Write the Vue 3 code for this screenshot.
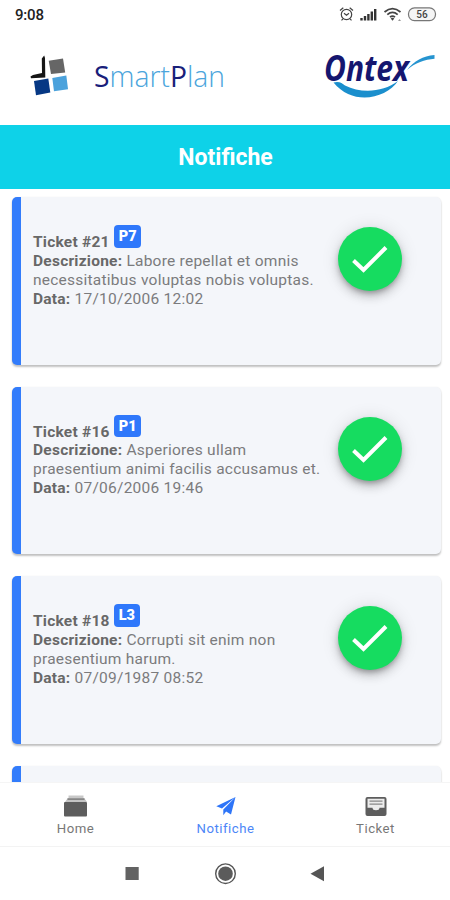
<script setup>
const tickets = [
  { id: 21, code: 'P7', lines: ['Labore repellat et omnis', 'necessitatibus voluptas nobis voluptas.'], date: '17/10/2006 12:02' },
  { id: 16, code: 'P1', lines: ['Asperiores ullam', 'praesentium animi facilis accusamus et.'], date: '07/06/2006 19:46' },
  { id: 18, code: 'L3', lines: ['Corrupti sit enim non', 'praesentium harum.'], date: '07/09/1987 08:52' },
]
</script>

<template>
  <div class="screen">
    <header class="status">
      <span class="time">9:08</span>
      <svg class="status-icons" width="100" height="16" viewBox="0 0 100 16">
        <g fill="none" stroke="#444" stroke-width="1.2">
          <circle cx="8.5" cy="8.5" r="5.2" />
          <path d="M2 4.5 5.300 1.700M11.700 1.700l3.300 2.800M5 12.800 3.500 14.300M12 12.800l1.500 1.500M6 7.300l2.500 2 2.500-2" />
        </g>
        <path d="M22.3 12h2.4v2.500h-2.4zM25.8 10h2.4v4.500h-2.4zM29.2 8h2.4v6.500h-2.4zM32.6 5.500H35v9h-2.4zM36 3h2.4v11.500H36z" fill="#333" />
        <g fill="none" stroke="#444" stroke-width="1.8">
          <path d="M46.500 6c5-4.3 11-4.3 16 0M49.300 8.600c3.3-2.8 7.1-2.8 10.4 0M52 11.100c1.6-1.3 3.4-1.3 5 0" />
        </g>
        <path d="m52.700 12.500 1.8 2.3 1.8-2.3c-1.1-.9-2.5-.9-3.6 0z" fill="#444" />
        <path d="m60 15 1.500-2 1.500 2z" fill="#999" />
        <rect x="70.5" y="1.8" width="27" height="12.8" rx="6" fill="#f5f5f5" stroke="#777" stroke-width="1.2" />
        <text x="84" y="12" text-anchor="middle" class="battery">56</text>
      </svg>
    </header>

    <section class="brands">
      <svg class="smartplan" width="200" height="52" viewBox="0 0 200 52">
        <path d="m11.8 8.5 2.4-3 .8 2.5.3 19.5L1 28.2l-.5-1.7L3 25l9-2z" fill="#151515" />
        <path d="m18.7 10.8 14.3-2.3 2.2 14L21 24z" fill="#666" />
        <path d="m4 31 14.3-2.5 2 14L6 45.3z" fill="#063884" />
        <path d="m22.3 28 14-2.5L38 39.3l-14 2z" fill="#4ba2dc" />
        <text x="64" y="37" class="sp-text" textLength="131" lengthAdjust="spacingAndGlyphs"><tspan class="navy">S</tspan>mart<tspan class="navy">P</tspan>lan</text>
      </svg>
      <svg class="ontex" width="112" height="50" viewBox="0 0 112 50">
        <path d="M8.500 32.500C14 31 17 33 20 35.500 36 43.500 58 42.500 73 31 61 48.500 28 56.500 8.500 32.500z" fill="#1b8fcd" />
        <path d="M82 20C89 11 98 6 109.500 5v3.800C100 9.500 90 13 82 20z" fill="#2694d0" />
        <text x="-1" y="31" class="ontex-text" textLength="85" lengthAdjust="spacingAndGlyphs">Ontex</text>
      </svg>
    </section>

    <h1 class="title">Notifiche</h1>

    <main class="list">
      <article v-for="t in tickets" :key="t.id" class="card">
        <div class="info">
          <div class="heading"><b>Ticket #{{ t.id }}</b><span class="tag">{{ t.code }}</span></div>
          <div><b>Descrizione:</b> {{ t.lines[0] }}</div>
          <div>{{ t.lines[1] }}</div>
          <div><b>Data:</b> {{ t.date }}</div>
        </div>
        <div class="done">
          <svg width="64" height="64" viewBox="0 0 64 64"><path d="m15.500 33.500 10 9.500 22.500-22.500" fill="none" stroke="#fff" stroke-width="4" /></svg>
        </div>
      </article>
      <article class="card"></article>
    </main>

    <nav class="tabs">
      <div class="tab">
        <svg width="26" height="24" viewBox="0 0 26 24">
          <path d="M5.500 1.500h15V4h-15z" fill="#c8c8c8" />
          <path d="M4.500 4.500h17L24 8H2z" fill="#c4c4c4" /><path d="M4.500 4.300h17v1.500h-17z" fill="#777" />
          <rect x="1" y="8" width="23" height="14.500" rx="1" fill="#5d5d5d" />
        </svg>
        <span>Home</span>
      </div>
      <div class="tab active">
        <svg width="26" height="24" viewBox="0 0 26 24">
          <path d="M22.500 3 3.300 12.200l5.700 2.400zM22.500 3 10.300 15.500v5.700l2.800-3.800 4.900 3.200z" fill="#2e75f8" />
        </svg>
        <span>Notifiche</span>
      </div>
      <div class="tab">
        <svg width="26" height="24" viewBox="0 0 26 24">
          <rect x="2.500" y="3" width="21" height="19" rx="2" fill="#5d5d5d" />
          <path d="M4.500 4.800h17v8.900h-5a3.500 2.500 0 0 1-7 0h-5z" fill="#ececec" />
          <path d="M6.500 7.200h13M6.500 10.200h13" stroke="#888" stroke-width="1.300" />
        </svg>
        <span>Ticket</span>
      </div>
    </nav>

    <footer class="system">
      <svg width="24" height="24" viewBox="0 0 24 24"><rect x="5.500" y="5" width="13.200" height="13" fill="#626262" /></svg>
      <svg width="24" height="24" viewBox="0 0 24 24"><circle cx="12.500" cy="11.700" r="9.800" fill="none" stroke="#555" stroke-width="1.400" /><circle cx="12.500" cy="11.700" r="7.300" fill="#5b5b5b" /></svg>
      <svg width="24" height="24" viewBox="0 0 24 24"><path d="M18 4.200v15L4.500 11.700z" fill="#555" /></svg>
    </footer>
  </div>
</template>

<style>
body { margin: 0; background: #fff; }
</style>

<style scoped>
.screen { width: 450px; height: 900px; display: flex; flex-direction: column; overflow: hidden; background: #fff; font-family: Roboto, sans-serif; }
.status { height: 30px; flex: none; display: flex; justify-content: space-between; align-items: flex-end; padding: 0 12px 0 15px; box-sizing: border-box; }
.time { font-size: 15px; line-height: 18px; font-weight: 500; color: #222; margin-bottom: 6px; letter-spacing: -.2px; }
.status-icons { margin-bottom: 8px; }
.battery { font: 500 10px Roboto, sans-serif; fill: #444; }
.brands { height: 95px; flex: none; display: flex; justify-content: space-between; padding: 20px 13px 0 30px; box-sizing: border-box; align-items: flex-start; }
.ontex { overflow: visible; }
.sp-text { font: 29px "Open Sans", sans-serif; font-weight: 300; fill: #4ba5dc; }
.navy { fill: #18207a; font-weight: 400; }
.ontex-text { font: italic 700 35px "Open Sans", sans-serif; fill: #15166f; }
.title { height: 64px; flex: none; margin: 0; background: #0ed2e8; color: #fff; font-size: 23px; line-height: 66px; text-align: center; font-weight: 700; text-indent: 1px; }
.list { flex: 1; min-height: 0; overflow: hidden; padding: 8px 9px 0 12px; display: flex; flex-direction: column; gap: 22px; }
.card { height: 167.500px; flex: none; box-sizing: border-box; border-left: 9.500px solid #327cfb; border-radius: 5px; background: #f4f6fa; box-shadow: 0 2px 2px rgba(0,0,0,.24), 0 0 2px rgba(0,0,0,.06); display: flex; justify-content: space-between; padding: 30px 39.500px 0 12px; }
.info { padding-top: 6.200px; font-size: 15.500px; line-height: 18.800px; letter-spacing: .24px; color: #7b7b7d; white-space: nowrap; }
.info b { color: #686868; font-weight: 700; }
.heading { display: flex; height: 18.800px; align-items: flex-end; gap: 4.500px; }
.tag { height: 22.500px; box-sizing: border-box; margin-bottom: 4px; padding: 0 4.500px; border-radius: 4px; background: #2f78fb; color: #fff; font-size: 14.500px; line-height: 23px; font-weight: 900; letter-spacing: 0; }
.done { width: 64px; height: 64px; flex: none; border-radius: 50%; background: #16dc60; box-shadow: 0 3px 5px -1px rgba(0,0,0,.25), 0 6px 10px rgba(0,0,0,.16), 0 1px 18px rgba(0,0,0,.12); }
.done svg { display: block; }
.tabs { height: 65px; flex: none; display: flex; background: #fff; border-top: 1px solid #f5f5f5; border-bottom: 1px solid #f3f3f3; box-sizing: border-box; }
.tab { flex: 1; display: flex; flex-direction: column; align-items: center; padding: 11px 0 0 1px; color: #777; font-size: 13.200px; line-height: 18px; letter-spacing: .5px; }
.tab span { margin-top: 2px; }
.active { color: #4c86f7; }
.system { height: 53px; flex: none; display: flex; justify-content: center; gap: 69px; padding-top: 15px; box-sizing: border-box; }
</style>
